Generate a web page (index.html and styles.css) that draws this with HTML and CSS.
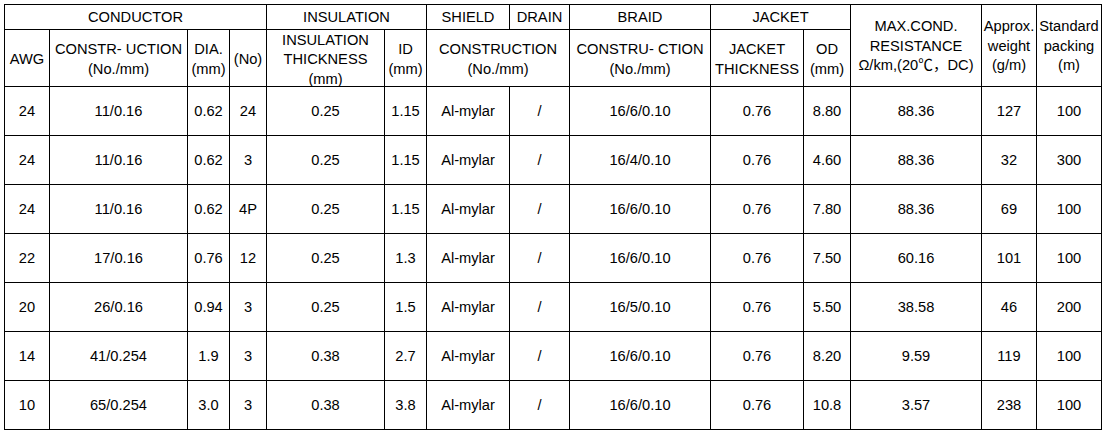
FILE: index.html
```html
<!DOCTYPE html>
<html lang="en">
<head>
<meta charset="utf-8">
<title>Cable specification</title>
<link rel="stylesheet" href="styles.css">
</head>
<body>
<div class="sheet">
  <div class="c h1 span4">CONDUCTOR</div>
  <div class="c h1 span2">INSULATION</div>
  <div class="c h1">SHIELD</div>
  <div class="c h1">DRAIN</div>
  <div class="c h1">BRAID</div>
  <div class="c h1 span2">JACKET</div>
  <div class="c tall">MAX.COND.<br>RESISTANCE<br>Ω/km,(20℃，DC)</div>
  <div class="c tall">Approx.<br>weight<br>(g/m)</div>
  <div class="c tall">Standard<br>packing<br>(m)</div>

  <div class="c h2">AWG</div>
  <div class="c h2">CONSTR- UCTION<br>(No./mm)</div>
  <div class="c h2">DIA.<br>(mm)</div>
  <div class="c h2">(No)</div>
  <div class="c h2 low">INSULATION<br>THICKNESS<br>(mm)</div>
  <div class="c h2">ID<br>(mm)</div>
  <div class="c h2 span2">CONSTRUCTION<br>(No./mm)</div>
  <div class="c h2">CONSTRU- CTION<br>(No./mm)</div>
  <div class="c h2">JACKET<br>THICKNESS</div>
  <div class="c h2">OD<br>(mm)</div>

  <div class="c">24</div><div class="c">11/0.16</div><div class="c">0.62</div><div class="c">24</div><div class="c">0.25</div><div class="c">1.15</div><div class="c">Al-mylar</div><div class="c">/</div><div class="c">16/6/0.10</div><div class="c">0.76</div><div class="c">8.80</div><div class="c">88.36</div><div class="c">127</div><div class="c">100</div>
  <div class="c">24</div><div class="c">11/0.16</div><div class="c">0.62</div><div class="c">3</div><div class="c">0.25</div><div class="c">1.15</div><div class="c">Al-mylar</div><div class="c">/</div><div class="c">16/4/0.10</div><div class="c">0.76</div><div class="c">4.60</div><div class="c">88.36</div><div class="c">32</div><div class="c">300</div>
  <div class="c">24</div><div class="c">11/0.16</div><div class="c">0.62</div><div class="c">4P</div><div class="c">0.25</div><div class="c">1.15</div><div class="c">Al-mylar</div><div class="c">/</div><div class="c">16/6/0.10</div><div class="c">0.76</div><div class="c">7.80</div><div class="c">88.36</div><div class="c">69</div><div class="c">100</div>
  <div class="c">22</div><div class="c">17/0.16</div><div class="c">0.76</div><div class="c">12</div><div class="c">0.25</div><div class="c">1.3</div><div class="c">Al-mylar</div><div class="c">/</div><div class="c">16/6/0.10</div><div class="c">0.76</div><div class="c">7.50</div><div class="c">60.16</div><div class="c">101</div><div class="c">100</div>
  <div class="c">20</div><div class="c">26/0.16</div><div class="c">0.94</div><div class="c">3</div><div class="c">0.25</div><div class="c">1.5</div><div class="c">Al-mylar</div><div class="c">/</div><div class="c">16/5/0.10</div><div class="c">0.76</div><div class="c">5.50</div><div class="c">38.58</div><div class="c">46</div><div class="c">200</div>
  <div class="c">14</div><div class="c">41/0.254</div><div class="c">1.9</div><div class="c">3</div><div class="c">0.38</div><div class="c">2.7</div><div class="c">Al-mylar</div><div class="c">/</div><div class="c">16/6/0.10</div><div class="c">0.76</div><div class="c">8.20</div><div class="c">9.59</div><div class="c">119</div><div class="c">100</div>
  <div class="c">10</div><div class="c">65/0.254</div><div class="c">3.0</div><div class="c">3</div><div class="c">0.38</div><div class="c">3.8</div><div class="c">Al-mylar</div><div class="c">/</div><div class="c">16/6/0.10</div><div class="c">0.76</div><div class="c">10.8</div><div class="c">3.57</div><div class="c">238</div><div class="c">100</div>
</div>
</body>
</html>
```
FILE: styles.css
```css
html, body {
  margin: 0;
  padding: 0;
  background: #ffffff;
}

body {
  padding: 4px 0 0 4px;
  font-family: "Liberation Sans", Arial, "Noto Sans CJK SC", sans-serif;
  font-size: 14.67px;
  line-height: 19.5px;
  color: #000000;
}

.sheet {
  display: grid;
  grid-template-columns: 45px 138px 42px 37px 118px 42px 83px 60px 141px 93px 47px 131px 55px 65px;
  grid-template-rows: 25px 57px repeat(7, 49px);
  width: max-content;
  border-left: 1px solid #000;
  border-top: 1px solid #000;
}

.c {
  box-sizing: border-box;
  border-right: 1px solid #000;
  border-bottom: 1px solid #000;
  display: flex;
  align-items: center;
  justify-content: center;
  text-align: center;
  white-space: nowrap;
  padding: 2px 1px 0;
}

.span4 { grid-column: span 4; }
.span2 { grid-column: span 2; }
.tall { grid-row: span 2; }

.h2 { padding-top: 3px; }
.low { padding-top: 4px; }
```
